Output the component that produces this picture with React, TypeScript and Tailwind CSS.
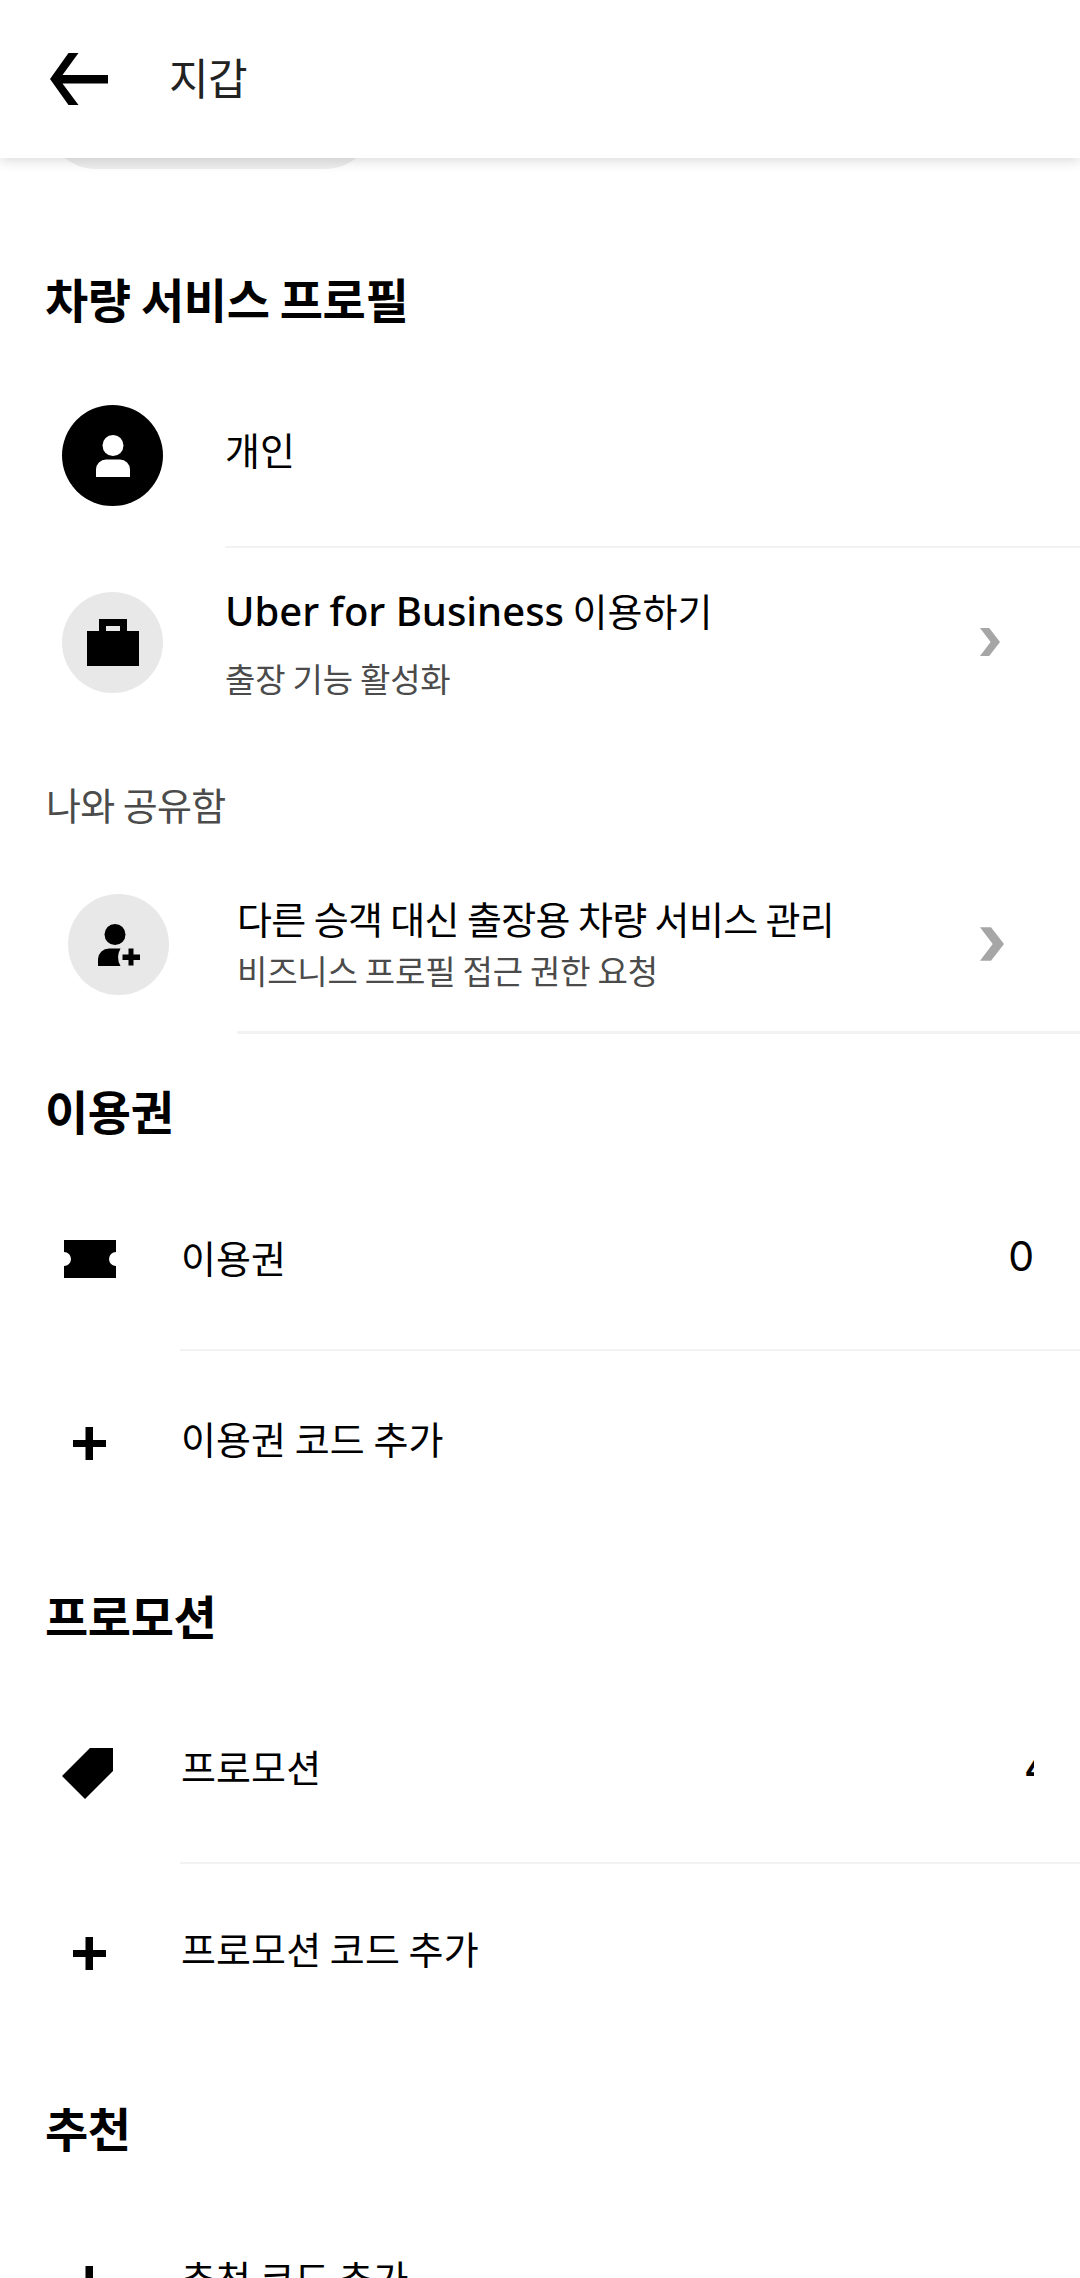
import type { ReactNode } from 'react';

function BackArrow() {
  return (
    <svg className="h-[52px] w-[58px]" viewBox="0 0 58 52" fill="currentColor">
      <path d="M18.5 0H28.5L12.5 22H58V30.5H12.5L28.5 52H18.5L0 26Z" />
    </svg>
  );
}

function PersonIcon() {
  return (
    <svg className="h-[42px] w-[36px]" viewBox="0 0 36 42" fill="currentColor">
      <circle cx="18" cy="10.5" r="10.5" />
      <path d="M1 42V34.5A10 10 0 0 1 11 24.5H25A10 10 0 0 1 35 34.5V42Z" />
    </svg>
  );
}

function BriefcaseIcon() {
  return (
    <svg className="h-[47px] w-[52px]" viewBox="0 0 52 47" fill="currentColor">
      <path fillRule="evenodd" d="M12 0H40V12H52V47H0V12H12ZM19 7V12H33V7Z" />
    </svg>
  );
}

function PersonAddIcon() {
  return (
    <svg className="h-[42px] w-[42px]" viewBox="0 0 42 42" fill="currentColor">
      <circle cx="17" cy="10.5" r="10.5" />
      <path d="M0 42V35A11 11 0 0 1 11 24.5H22.5Q17.5 33.5 22.5 42Z" />
      <path d="M30.5 24.5H35.5V30.5H42V36H35.5V41.5H30.5V36H24.5V30.5H30.5Z" />
    </svg>
  );
}

function TicketIcon() {
  return (
    <svg className="h-[38px] w-[52px]" viewBox="0 0 52 38" fill="currentColor">
      <path d="M0 0H52V12A7 7 0 0 0 52 26V38H0V26A7 7 0 0 0 0 12Z" />
    </svg>
  );
}

function TagIcon() {
  return (
    <svg className="mt-[11px] mr-[5px] h-[51px] w-[51px] shrink-0" viewBox="0 0 51 51" fill="currentColor">
      <path d="M28 0H51V23L23 51L0 28Z" />
    </svg>
  );
}

function PlusIcon() {
  return (
    <svg className="mt-[7px] mr-px h-[33px] w-[33px]" viewBox="0 0 33 33" fill="currentColor">
      <path d="M12.5 0H20V13H33V20H20V33H12.5V20H0V13H12.5Z" />
    </svg>
  );
}

function Chevron({ className }: { className: string }) {
  return (
    <svg className={`shrink-0 text-[#a6a6a6] ${className}`} viewBox="0 0 20 28" fill="currentColor">
      <path d="M0 0H9.2L20 14L9.2 28H0L10.6 14Z" />
    </svg>
  );
}

function SectionTitle({ children }: { children: ReactNode }) {
  return (
    <h2 className="ml-[45px] h-[60px] text-[47px] leading-[60px] font-bold tracking-[-0.4px]">{children}</h2>
  );
}

function Avatar({ className, children }: { className: string; children: ReactNode }) {
  return (
    <div className={`flex size-[101px] shrink-0 items-center justify-center rounded-full ${className}`}>
      {children}
    </div>
  );
}

function ItemRow({
  icon,
  label,
  value,
  className = '',
}: {
  icon: ReactNode;
  label: string;
  value?: ReactNode;
  className?: string;
}) {
  return (
    <div className={`flex items-start ${className}`}>
      <div className="flex h-[52px] w-[180px] shrink-0 items-center justify-center">{icon}</div>
      <p className="h-[48px] flex-1 pl-px text-[38px] leading-[48px] tracking-[0.1px]">{label}</p>
      {value}
    </div>
  );
}

function Divider({ className }: { className: string }) {
  return <div className={`shrink-0 bg-[#f2f2f2] ${className}`} />;
}

export default function App() {
  return (
    <div className="flex h-[2278px] w-[1080px] flex-col overflow-hidden bg-white font-['Noto_Sans_CJK_KR',sans-serif] text-black">
      <header className="relative z-10 flex h-[158px] shrink-0 items-center bg-white pl-[50px] shadow-[0_3px_12px_rgba(0,0,0,0.14)]">
        <BackArrow />
        <h1 className="mb-[6px] ml-[61px] text-[43px] leading-[60px] tracking-[-0.5px] text-[#222]">지갑</h1>
      </header>

      {/* Button scrolled under the header */}
      <div className="ml-[46px] flex h-[11px] w-[329px] shrink-0 items-end overflow-hidden">
        <div className="h-[100px] w-full shrink-0 rounded-full bg-[#eee]" />
      </div>

      <section className="mt-[99px] shrink-0">
        <SectionTitle>차량 서비스 프로필</SectionTitle>

        <div className="flex h-[218px] items-start pt-[77px] pl-[62px]">
          <Avatar className="bg-black text-white">
            <PersonIcon />
          </Avatar>
          <p className="mt-[20px] ml-[62px] text-[38px] leading-[48px]">개인</p>
        </div>
        <Divider className="ml-[225px] h-[2px]" />

        <div className="flex h-[230px] items-start pt-[38px] pr-[80px] pl-[62px]">
          <Avatar className="mt-[6px] bg-[#e8e8e8]">
            <BriefcaseIcon />
          </Avatar>
          <div className="ml-[62px] flex-1">
            <p className="h-[48px] text-[38px] leading-[48px] whitespace-nowrap">
              <span className="font-['Noto_Sans'] text-[40px] font-medium">Uber for Business</span> 이용하기
            </p>
            <p className="mt-[20px] text-[33px] leading-[48px] tracking-[-0.2px] text-[#4b4b4b]">출장 기능 활성화</p>
          </div>
          <Chevron className="mt-[42px] h-[28px] w-[20px]" />
        </div>

        <h3 className="ml-[46px] h-[56px] text-[38px] leading-[52px] tracking-[-0.6px] text-[#4b4b4b]">나와 공유함</h3>

        <div className="flex h-[197px] items-start pt-[60px] pr-[76px] pl-[68px]">
          <Avatar className="bg-[#e8e8e8]">
            <PersonAddIcon />
          </Avatar>
          <div className="ml-[68px] flex-1">
            <p className="h-[48px] text-[38px] leading-[48px] tracking-[-0.6px] whitespace-nowrap">
              다른 승객 대신 출장용 차량 서비스 관리
            </p>
            <p className="mt-[4px] text-[33px] leading-[48px] tracking-[-0.2px] text-[#4b4b4b]">
              비즈니스 프로필 접근 권한 요청
            </p>
          </div>
          <Chevron className="mt-[33px] h-[34px] w-[24px]" />
        </div>
        <Divider className="ml-[237px] h-[3px]" />
      </section>

      <section className="mt-[46px] shrink-0">
        <SectionTitle>이용권</SectionTitle>
        <ItemRow
          className="h-[209px] pt-[93px]"
          icon={<TicketIcon />}
          label="이용권"
          value={<span className="mr-[46px] font-[Inter] text-[41px] leading-[46px]">0</span>}
        />
        <Divider className="ml-[180px] h-[2px]" />
        <ItemRow className="h-[150px] pt-[63px]" icon={<PlusIcon />} label="이용권 코드 추가" />
      </section>

      <section className="mt-[84px] shrink-0">
        <SectionTitle>프로모션</SectionTitle>
        <ItemRow
          className="h-[217px] pt-[97px]"
          icon={<TagIcon />}
          label="프로모션"
          value={
            <span className="mr-[46px] w-[10px] overflow-hidden font-[Inter] text-[41px] leading-[50px] font-medium">
              4
            </span>
          }
        />
        <Divider className="ml-[180px] h-[2px]" />
        <ItemRow className="h-[150px] pt-[60px]" icon={<PlusIcon />} label="프로모션 코드 추가" />
      </section>

      <section className="mt-[83px] shrink-0">
        <SectionTitle>추천</SectionTitle>
        <ItemRow className="pt-[96px]" icon={<PlusIcon />} label="추천 코드 추가" />
      </section>
    </div>
  );
}
